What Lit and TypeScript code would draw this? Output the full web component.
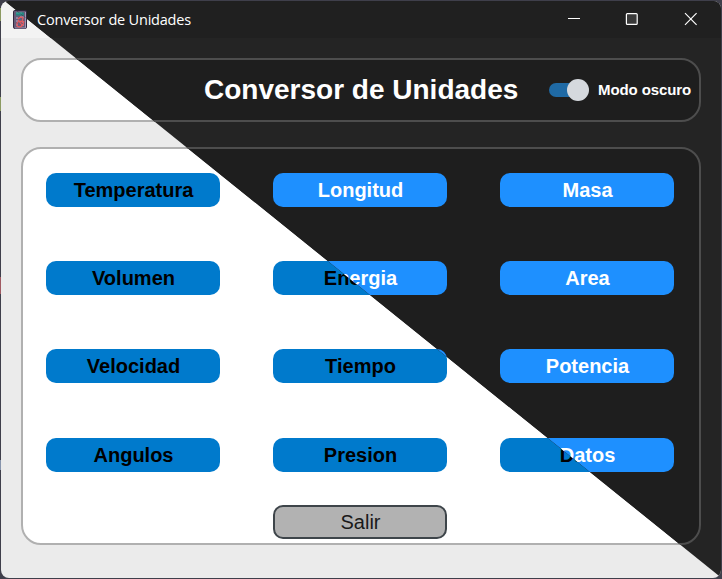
import { LitElement, html, css } from "lit";
import { customElement, property } from "lit/decorators.js";

const UNITS = [
  "Temperatura", "Longitud", "Masa",
  "Volumen", "Energia", "Area",
  "Velocidad", "Tiempo", "Potencia",
  "Angulos", "Presion", "Datos",
];

@customElement("converter-window")
export class ConverterWindow extends LitElement {
  @property({ reflect: true }) theme: "light" | "dark" = "light";

  static styles = css`
    :host {
      --bar: #f3f3f3;
      --surface: #ebebeb;
      --panel: #ffffff;
      --line: #b0b0b0;
      --ink: #000000;
      --button: #007acc;
      display: flex;
      flex-direction: column;
      box-sizing: border-box;
      width: 720px;
      height: 577px;
      border-radius: 8px;
      overflow: hidden;
      background: var(--surface);
      color: var(--ink);
      font-family: "Liberation Sans", Arial, sans-serif;
    }
    :host([theme="dark"]) {
      --bar: #202020;
      --surface: #242424;
      --panel: #1e1e1e;
      --line: #4d4d4d;
      --ink: #ffffff;
      --button: #1e90ff;
    }
    .titlebar {
      display: flex;
      align-items: center;
      flex: none;
      height: 37px;
      padding-left: 12px;
      background: var(--bar);
    }
    .app-icon { flex: none; width: 14px; height: 19px; }
    .caption {
      flex: 1;
      margin-left: 10px;
      font: 14.5px/20px "Open Sans", "Noto Sans", sans-serif;
      letter-spacing: -0.2px;
      white-space: nowrap;
    }
    .controls { display: flex; width: 176px; }
    .controls svg { width: 58.6px; height: 37px; }
    .header, .panel {
      box-sizing: border-box;
      flex: none;
      width: 680px;
      margin-left: 20px;
      border: 2px solid var(--line);
      border-radius: 20px;
      background: var(--panel);
    }
    .header {
      display: flex;
      align-items: center;
      height: 64px;
      margin-top: 20px;
      padding-left: 181px;
    }
    h1 { margin: 0; font-size: 28px; line-height: 34px; width: 345px; white-space: nowrap; }
    .switch {
      display: grid;
      align-items: center;
      width: 40px;
      height: 22px;
      margin-top: -1px;
    }
    .track, .knob { grid-area: 1 / 1; }
    .track { width: 34px; height: 14px; border-radius: 7px; background: #1f6aa5; }
    .knob { justify-self: end; width: 22px; height: 22px; border-radius: 50%; background: #d5d9de; }
    .mode {
      margin: -2px 0 0 9px;
      font-size: 15px;
      font-weight: bold;
      letter-spacing: -0.1px;
      white-space: nowrap;
    }
    .panel { height: 398px; margin-top: 25px; padding-top: 24px; }
    .grid {
      display: grid;
      grid-template-columns: repeat(3, 174px);
      grid-template-rows: 34px 34px 35px 34px;
      gap: 54px 53px;
      margin-left: 23px;
    }
    button {
      box-sizing: border-box;
      width: 174px;
      height: 34px;
      padding: 0 0 0 1px;
      border: 0;
      border-radius: 10px;
      background: var(--button);
      color: var(--ink);
      font: bold 20px/34px "Liberation Sans", Arial, sans-serif;
    }
    .exit {
      display: block;
      margin: 33px 0 0 250px;
      border: 2px solid #3e454a;
      background: #b2b2b2;
      color: #1a1a1a;
      font-weight: normal;
      line-height: 30px;
    }
  `;

  render() {
    return html`
      <div class="titlebar">
        <svg class="app-icon" viewBox="0 0 14 19" aria-hidden="true">
          <rect x=".5" y=".5" width="13" height="18" rx="1.3" fill="#665c79" stroke="#30263d" />
          <path d="M12.5 2v16H2" fill="none" stroke="#a296b5" />
          <path d="M3 2.5h8v3H3z" fill="#238783" />
          <path d="M3 3h6" stroke="#45aaa0" />
          <path d="M3 8h2M7 7h4M3 11h2M9 12h2M3 15h2M8 15h3" stroke="#b9acd0" />
          <path d="M5 9q3-3 5-1l-1 4q-3-2-5 1v3q3 2 6-1l1-4M5 10l4 5" fill="none" stroke="#e8575c" stroke-width="1.2" />
        </svg>
        <span class="caption">Conversor de Unidades</span>
        <div class="controls">
          <svg viewBox="0 0 58.6 37" fill="none" stroke="currentColor"><path d="M23 17.5h12" /></svg>
          <svg viewBox="0 0 58.6 37" fill="none" stroke="currentColor" stroke-width="1.2">
            <rect x="22.4" y="12.6" width="10.8" height="10.8" rx="1" fill="#888888" fill-opacity=".25" />
          </svg>
          <svg viewBox="0 0 58.6 37" fill="none" stroke="currentColor" stroke-width="1.15">
            <path d="m23 12.2 11.6 11.6m0-11.6L23 23.8" />
          </svg>
        </div>
      </div>
      <div class="header">
        <h1>Conversor de Unidades</h1>
        <div class="switch"><div class="track"></div><div class="knob"></div></div>
        <span class="mode">Modo oscuro</span>
      </div>
      <div class="panel">
        <div class="grid">${UNITS.map((unit) => html`<button>${unit}</button>`)}</div>
        <button class="exit">Salir</button>
      </div>
    `;
  }
}

@customElement("app-root")
export class AppRoot extends LitElement {
  static styles = css`
    :host {
      display: block;
      position: relative;
      box-sizing: border-box;
      width: 722px;
      height: 579px;
      padding: 1px;
      overflow: hidden;
      background:
        linear-gradient(#8c9a62, #8c9a62) 0 8px / 1px 13px no-repeat,
        linear-gradient(#8c9a62, #8c9a62) 0 97px / 1px 14px no-repeat,
        linear-gradient(#a05a62, #a05a62) 0 277px / 1px 17px no-repeat,
        linear-gradient(#8794ac, #8794ac) 0 460px / 1px 10px no-repeat,
        #3f3f4b;
    }
    /* The dark theme covers the upper right half, split along the diagonal. */
    .dark {
      position: absolute;
      top: 1px;
      left: 1px;
      clip-path: polygon(3.8px 0, 100% 0, 100% 576.5px);
    }
  `;

  render() {
    return html`
      <converter-window theme="light"></converter-window>
      <converter-window class="dark" theme="dark"></converter-window>
    `;
  }
}
